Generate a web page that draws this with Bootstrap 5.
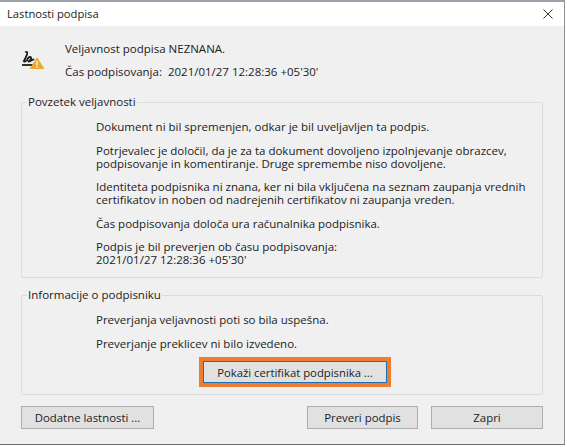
<!DOCTYPE html>
<html lang="sl">
<head>
<meta charset="utf-8">
<title>Lastnosti podpisa</title>
<link href="https://cdn.jsdelivr.net/npm/bootstrap@5.3.0/dist/css/bootstrap.min.css" rel="stylesheet">
<style>
html,body{height:100%;margin:0;background:#fff;overflow:hidden}
body{font-family:"Open Sans","Noto Sans",sans-serif;font-size:11.5px;line-height:13px;color:#222}
.dlg{width:565px;height:445px;background:#f0f0f0;border-top:2px solid #9aa3ab;border-right:1px solid #8f8f8f;border-bottom:1px solid #6f6f6f;display:flex;flex-direction:column}
.ttl{height:24px;background:#fff;padding:0 11px 1px 7px;font-size:11.2px;color:#222}
.bodyw{padding:0 21px;flex:1;display:flex;flex-direction:column}
.hd{height:76px;padding-top:16px}
.hd .ico{width:44px;flex:none;padding-top:8px}
.hd p{margin:0 0 10px}
.grp{border:1px solid #dcdcdc;border-radius:2px;position:relative;padding-left:74px}
.grp p{margin:0 0 10.5px}
.grp .lg{position:absolute;left:5px;top:-8px;background:#f0f0f0;padding:0 1px;line-height:13px}
.g1{height:176px;padding-top:17px;margin-bottom:17px}
.g2{height:100px;padding-top:17px}
.wbtn{background:#e1e1e1;border:1px solid #adadad;border-radius:0;height:23px;font-size:11.4px;line-height:20px;padding:0;color:#222;font-family:inherit;display:block}
.wbtn:hover{background:#e1e1e1}
.b1{width:133px}.b2{width:111px}.b3{width:112px}
.foc{background:#e1e1e1;border:1px solid #1f6fb5;border-radius:0;width:184px;height:22px;font-size:11.3px;line-height:19px;padding:0;color:#222;font-family:inherit;display:block;outline:4px solid #ed7d31;outline-offset:0}
.cwrap{margin-left:107px;margin-top:11.5px}
.g2 p:nth-of-type(2){margin-bottom:0}
.foot{margin-top:11px;gap:13px}
</style>
</head>
<body>
<div class="dlg">
  <div class="ttl d-flex align-items-center justify-content-between">
    <span>Lastnosti podpisa</span>
    <svg width="10" height="10" viewBox="0 0 10 10" aria-hidden="true"><path d="M.5.5l9 9M9.500.5l-9 9" stroke="#333" fill="none" stroke-width="1"/></svg>
  </div>
  <div class="bodyw">
    <div class="hd d-flex">
      <div class="ico">
        <svg width="24" height="20" viewBox="0 0 24 20" aria-hidden="true">
          <path d="M4.500 2.500C5 1 7 2 6 4.500S3.500 10 2.500 12M2.500 12c1-1 2-1 3-1M6 11c0-3 3-5 4-3.500S8 11 7.500 11.500 10 11 13 9" stroke="#1a1a1a" stroke-width="1.800" fill="none"/>
          <path d="M1 15h11" stroke="#1a1a1a" stroke-width="1.800"/>
          <path d="M16 7L23.500 19H8.500Z" fill="#f0a92e"/>
          <path d="M16 11v4M16 16v1.500" stroke="#fff" stroke-width="1.300"/>
        </svg>
      </div>
      <div>
        <p>Veljavnost podpisa NEZNANA.</p>
        <p>Čas podpisovanja:&nbsp; 2021/01/27 12:28:36 +05'30'</p>
      </div>
    </div>
    <div class="grp g1">
      <span class="lg">Povzetek veljavnosti</span>
      <p>Dokument ni bil spremenjen, odkar je bil uveljavljen ta podpis.</p>
      <p>Potrjevalec je določil, da je za ta dokument dovoljeno izpolnjevanje obrazcev,<br>podpisovanje in komentiranje. Druge spremembe niso dovoljene.</p>
      <p>Identiteta podpisnika ni znana, ker ni bila vključena na seznam zaupanja vrednih<br>certifikatov in noben od nadrejenih certifikatov ni zaupanja vreden.</p>
      <p>Čas podpisovanja določa ura računalnika podpisnika.</p>
      <p>Podpis je bil preverjen ob času podpisovanja:<br>2021/01/27 12:28:36 +05'30'</p>
    </div>
    <div class="grp g2">
      <span class="lg">Informacije o podpisniku</span>
      <p>Preverjanja veljavnosti poti so bila uspešna.</p>
      <p>Preverjanje preklicev ni bilo izvedeno.</p>
      <div class="cwrap"><button type="button" class="btn foc">Pokaži certifikat podpisnika ...</button></div>
    </div>
    <div class="foot d-flex">
      <button type="button" class="btn wbtn b1 me-auto">Dodatne lastnosti ...</button>
      <button type="button" class="btn wbtn b2">Preveri podpis</button>
      <button type="button" class="btn wbtn b3">Zapri</button>
    </div>
  </div>
</div>
</body>
</html>
